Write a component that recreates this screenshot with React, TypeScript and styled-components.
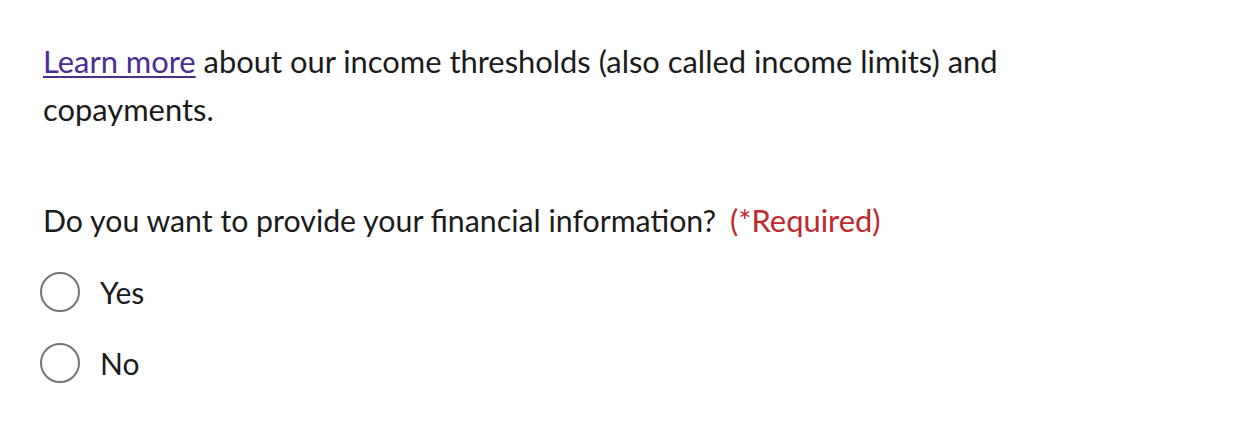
import React from "react";
import styled, { createGlobalStyle } from "styled-components";

const Global = createGlobalStyle`
  html, body { margin: 0; padding: 0; background: #ffffff; }
  body { font-family: "Lato", "Liberation Sans", sans-serif; color: #1b1b1b; }
`;

const Page = styled.div`
  padding: 38px 43px 0 43px;
  max-width: 1040px;
`;

const Paragraph = styled.p`
  margin: 0;
  font-size: 30.9px;
  line-height: 48px;
`;

const Link = styled.a`
  color: #4c2c92;
  text-decoration: underline;
  text-decoration-thickness: 2px;
  text-underline-offset: 3px;
`;

const Fieldset = styled.fieldset`
  border: 0;
  margin: 66px 0 0 0;
  padding: 0;
  min-width: 0;
`;

const Legend = styled.legend`
  padding: 0;
  font-size: 30.3px;
  line-height: 40px;
`;

const Required = styled.span`
  color: #c0282f;
  margin-left: 14px;
  font-size: 30.9px;
`;

const Options = styled.div`
  display: flex;
  flex-direction: column;
  gap: 31px;
  margin-top: 31px;
`;

const Option = styled.label`
  display: flex;
  align-items: center;
  gap: 20px;
  font-size: 30px;
  line-height: 40px;
  cursor: pointer;
`;

const Radio = styled.span`
  box-sizing: border-box;
  width: 40px;
  height: 40px;
  border: 2px solid #757575;
  border-radius: 50%;
  background: #fff;
  flex: none;
  margin-left: -3px;
`;

export default function App() {
  return (
    <>
      <Global />
      <Page>
        <Paragraph>
          <Link href="#">Learn more</Link> about our income thresholds (also called income limits) and copayments.
        </Paragraph>
        <Fieldset>
          <Legend>
            Do you want to provide your financial information?<Required>(*Required)</Required>
          </Legend>
          <Options>
            <Option><Radio />Yes</Option>
            <Option><Radio />No</Option>
          </Options>
        </Fieldset>
      </Page>
    </>
  );
}
